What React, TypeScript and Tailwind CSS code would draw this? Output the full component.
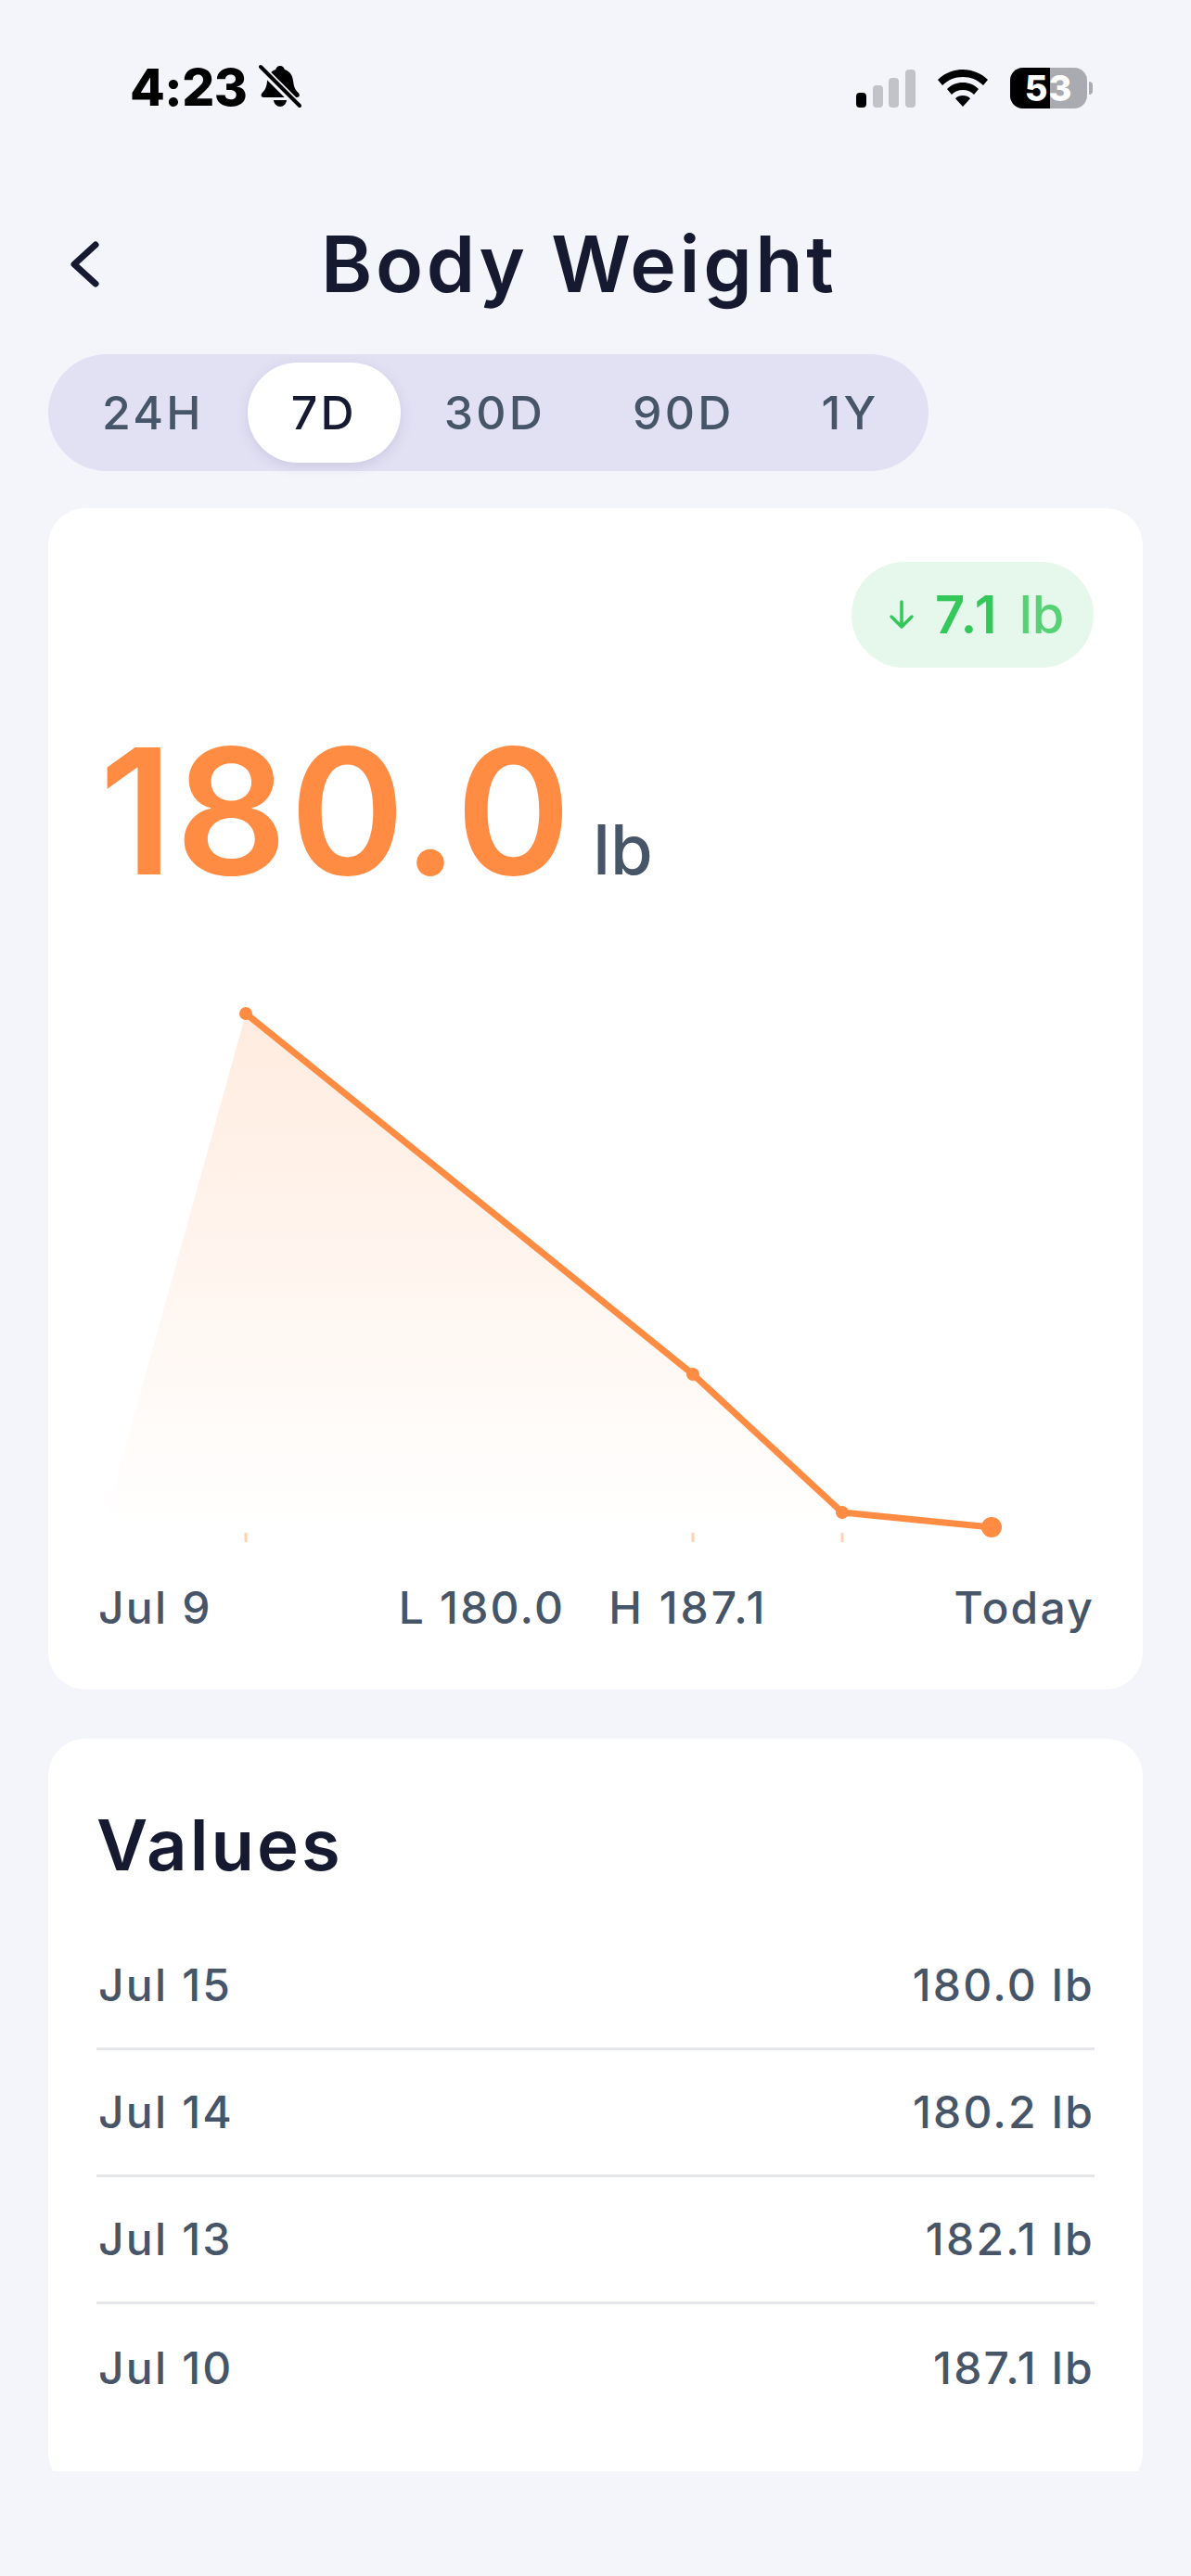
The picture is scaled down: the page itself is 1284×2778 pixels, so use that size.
const INTER = "font-['Inter','Liberation_Sans',sans-serif]";

const RANGES = ["24H", "7D", "30D", "90D", "1Y"];

const VALUES = [
  { date: "Jul 15", value: "180.0 lb" },
  { date: "Jul 14", value: "180.2 lb" },
  { date: "Jul 13", value: "182.1 lb" },
  { date: "Jul 10", value: "187.1 lb" },
];

function StatusBar() {
  return (
    <div className="flex h-[235px] shrink-0 items-start justify-between pt-[69px] pr-[106px] pl-[140px]">
      <div className="flex items-center gap-[12px]">
        <span className="text-[55px] leading-[50px] font-extrabold tracking-[-0.5px] text-black">4:23</span>
        <svg width="48" height="48" viewBox="0 0 48 48" className="mt-[-2px]">
          <path
            d="M24 2c2.6 0 4.4 1.7 4.8 4 6 1.8 8.6 6.6 9.4 13 .6 5 1.6 8.400 5.400 12 2 2 1.600 5-1.600 5H6.400c-3.200 0-3.600-3-1.600-5 3.400-3.200 4.600-6.600 5.200-12C10.800 12.600 13.200 7.800 19.200 6c.4-2.300 2.200-4 4.800-4z"
            fill="#000"
          />
          <path d="M17 39h14c-.4 4-3.400 7-7 7s-6.600-3-7-7z" fill="#000" />
          <path d="M2 3l44 44" stroke="#F4F5FB" strokeWidth="9" />
          <path d="M3 3l42 42" stroke="#000" strokeWidth="4" strokeLinecap="round" />
        </svg>
      </div>
      <div className="flex items-center gap-[24px] pt-[4px]">
        <svg width="64" height="41" viewBox="0 0 64 41">
          <rect x="0" y="25" width="11" height="16" rx="4" fill="#000" />
          <rect x="18" y="17" width="11" height="24" rx="4" fill="#C2C3C9" />
          <rect x="35" y="9" width="11" height="32" rx="4" fill="#C2C3C9" />
          <rect x="53" y="0" width="11" height="41" rx="4" fill="#C2C3C9" />
        </svg>
        <svg width="54" height="40" viewBox="0 0 54 40">
          <path d="M27 0c10.400 0 19.800 4 27 11l-5 6c-6-5.800-13.400-9-22-9s-16 3.200-22 9l-5-6C7.200 4 16.600 0 27 0z" fill="#000" />
          <path d="M27 14c6.600 0 12.600 2.600 17 7l-5 6c-3.200-3.200-7.200-5-12-5s-8.800 1.800-12 5l-5-6c4.400-4.400 10.400-7 17-7z" fill="#000" />
          <path d="M27 28c3.200 0 6 1.200 8 3.200L27 40l-8-8.800c2-2 4.800-3.200 8-3.200z" fill="#000" />
        </svg>
        <div className="flex items-center gap-[2px]">
          <div className="relative flex h-[44px] w-[83px] items-center justify-center overflow-hidden rounded-[14px] bg-[#AAABB0]">
            <div className="absolute top-0 bottom-0 left-0 w-[43px] bg-black" />
            <span className="relative text-[38px] leading-none font-extrabold tracking-[1px] text-white">53</span>
          </div>
          <div className="h-[14px] w-[4px] rounded-r-full bg-[#AAABB0]" />
        </div>
      </div>
    </div>
  );
}

function Header() {
  return (
    <div className="flex h-[100px] shrink-0 items-center pl-[75px]">
      <svg width="32" height="50" viewBox="0 0 32 50" fill="none">
        <path d="M28 4 L5 25 L28 46" stroke="#161A30" strokeWidth="7" strokeLinecap="round" strokeLinejoin="round" />
      </svg>
      <h1 className="ml-[239px] text-[84px] leading-none font-semibold tracking-[3.6px] text-[#161A30]">Body Weight</h1>
    </div>
  );
}

function RangeTabs() {
  return (
    <div className="mt-[47px] flex h-[126px] w-[949px] shrink-0 items-center self-start rounded-full bg-[#E2E1F3] px-[11px]">
      {RANGES.map((r) => (
        <div
          key={r}
          className={
            r === "7D"
              ? "flex h-[108px] items-center rounded-[54px] bg-white px-[47px] text-[50px] font-medium tracking-[3.2px] text-[#161A30] shadow-[0_4px_14px_rgba(80,70,140,0.15)]"
              : "flex h-[108px] items-center px-[47px] text-[50px] font-medium tracking-[3.2px] text-[#475569]"
          }
        >
          {r}
        </div>
      ))}
    </div>
  );
}

function WeightChart() {
  // viewBox uses page coordinates, offset by the svg's own left and top edge
  return (
    <svg width="1180" height="620" viewBox="52 1060 1180 620" className="block">
      <defs>
        <linearGradient id="weightFill" x1="0" y1="0" x2="0" y2="1">
          <stop offset="0" stopColor="#FF8C42" stopOpacity="0.17" />
          <stop offset="1" stopColor="#FF8C42" stopOpacity="0" />
        </linearGradient>
      </defs>
      <path d="M110 1650 L265 1092 L747 1481 L908 1630 L1069 1646 L1069 1650 Z" fill="url(#weightFill)" />
      <path d="M265 1092 L747 1481 L908 1630 L1069 1646" fill="none" stroke="#FF8C42" strokeWidth="7" strokeLinejoin="round" />
      <circle cx="265" cy="1092" r="7" fill="#FF8C42" />
      <circle cx="747" cy="1481" r="7" fill="#FF8C42" />
      <circle cx="908" cy="1630" r="7" fill="#FF8C42" />
      <circle cx="1069" cy="1646" r="11" fill="#FF8C42" />
      <path d="M265 1652v10M747 1652v10M908 1652v10" stroke="#FFD2B3" strokeWidth="3" />
    </svg>
  );
}

function SummaryCard() {
  return (
    <section className="mt-[40px] h-[1274px] w-[1180px] shrink-0 self-start rounded-[40px] bg-white">
      <div className="flex justify-end pt-[58px] pr-[53px]">
        <div className="flex h-[114px] w-[261px] items-center rounded-full bg-[#E6F7EC] pl-[39px]">
          <svg width="30" height="36" viewBox="0 0 30 36" fill="none">
            <path d="M15 4v26M4 20l11 11 11-11" stroke="#34C759" strokeWidth="3.500" strokeLinecap="round" strokeLinejoin="round" />
          </svg>
          <span className="ml-[21px] text-[56px] leading-none font-semibold tracking-[2.3px] text-[#34C759]">7.1</span>
          <span className="ml-[22px] text-[56px] leading-none font-medium text-[#34C759]/80">lb</span>
        </div>
      </div>
      <div className="mt-[55px] flex items-baseline pl-[55px]">
        <span className="text-[188px] leading-[200px] font-semibold tracking-[2.8px] text-[#FF8C42]">180.0</span>
        <span className="ml-[21px] text-[74px] leading-none font-medium text-[#475569]">lb</span>
      </div>
      <div className="mt-[86px]">
        <WeightChart />
      </div>
      <div className="mt-[17px] flex items-center justify-between pr-[52px] pl-[54px] text-[48px] font-medium tracking-[2.2px] text-[#475569]">
        <span>Jul 9</span>
        <div className="flex gap-[47px]">
          <span>L 180.0</span>
          <span className="tracking-[3px]">H 187.1</span>
        </div>
        <span>Today</span>
      </div>
    </section>
  );
}

function ValuesCard() {
  return (
    <section className="mt-[53px] h-[810px] w-[1180px] shrink-0 self-start rounded-[40px] bg-white px-[52px] pt-[71px]">
      <h2 className="text-[76px] leading-[86px] font-semibold tracking-[3px] text-[#161A30]">Values</h2>
      <div className="mt-[42px]">
        {VALUES.map((row, i) => (
          <div
            key={row.date}
            className={
              i < VALUES.length - 1
                ? "flex h-[137px] items-center justify-between border-b-[3px] border-[#E5E7EB] text-[48px] font-medium tracking-[2.2px] text-[#475569]"
                : "flex h-[137px] items-center justify-between text-[48px] font-medium tracking-[2.2px] text-[#475569]"
            }
          >
            <span className="pl-[2px]">{row.date}</span>
            <span>{row.value}</span>
          </div>
        ))}
      </div>
    </section>
  );
}

export default function App() {
  return (
    <div className={`${INTER} h-[2778px] w-[1284px] overflow-hidden bg-[#F4F5FB]`}>
      <StatusBar />
      <Header />
      <div className="flex h-[2330px] flex-col overflow-hidden pl-[52px]">
        <RangeTabs />
        <SummaryCard />
        <ValuesCard />
      </div>
    </div>
  );
}
